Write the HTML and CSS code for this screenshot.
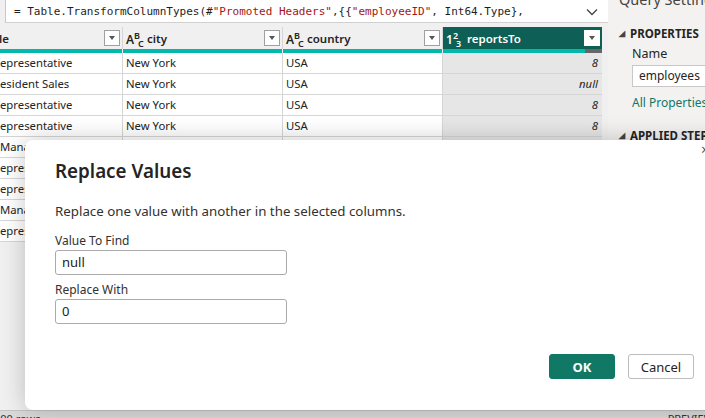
FILE: index.html
```html
<!DOCTYPE html>
<html>
<head>
<meta charset="utf-8">
<link rel="stylesheet" href="styles.css">
</head>
<body>
<div class="app">
  <div class="main">
    <div class="formula">
      <div class="code">= Table.TransformColumnTypes(#<span class="str">"Promoted Headers"</span>,{{<span class="str">"employeeID"</span>, Int64.Type},</div>
      <svg class="chev" width="12" height="8" viewBox="0 0 12 8"><path d="M1 1.5 L6 6.5 L11 1.5" fill="none" stroke="#444" stroke-width="1.3"/></svg>
    </div>
    <div class="grid">
      <div class="hcell c1"><span class="hname clip">le</span><span class="dd"><i></i></span></div>
      <div class="hcell"><span class="abc">A<sup>B</sup><sub>C</sub></span><span class="hname">city</span><span class="dd"><i></i></span></div>
      <div class="hcell"><span class="abc">A<sup>B</sup><sub>C</sub></span><span class="hname">country</span><span class="dd"><i></i></span></div>
      <div class="hcell sel"><span class="abc">1<sup>2</sup><sub>3</sub></span><span class="hname">reportsTo</span><span class="dd"><i></i></span></div>

      <div class="qbar"></div><div class="qbar"></div><div class="qbar"></div><div class="qbar qsel"></div>

      <div class="cell c1">epresentative</div><div class="cell">New York</div><div class="cell">USA</div><div class="cell num">8</div>
      <div class="cell c1">esident Sales</div><div class="cell">New York</div><div class="cell">USA</div><div class="cell num">null</div>
      <div class="cell c1">epresentative</div><div class="cell">New York</div><div class="cell">USA</div><div class="cell num">8</div>
      <div class="cell c1">epresentative</div><div class="cell">New York</div><div class="cell">USA</div><div class="cell num">8</div>
      <div class="cell c1">Manager</div><div class="cell">New York</div><div class="cell">USA</div><div class="cell num">2</div>
      <div class="cell c1">epresentative</div><div class="cell">New York</div><div class="cell">USA</div><div class="cell num">6</div>
      <div class="cell c1">epresentative</div><div class="cell">New York</div><div class="cell">USA</div><div class="cell num">6</div>
      <div class="cell c1">Manager</div><div class="cell">New York</div><div class="cell">USA</div><div class="cell num">2</div>
      <div class="cell c1">epresentative</div><div class="cell">New York</div><div class="cell">USA</div><div class="cell num">5</div>
    </div>
  </div>
  <div class="panel">
    <div class="ptitle">Query Settings</div>
    <div class="sect"><span class="tri">◢</span>PROPERTIES</div>
    <div class="plabel">Name</div>
    <div class="pinput">employees</div>
    <div class="plink">All Properties</div>
    <div class="sect sect2"><span class="tri">◢</span>APPLIED STEPS</div>
  </div>
</div>
<div class="status"><span class="rows">100 rows</span><span class="prev">PREVIEW DOWNLOADED</span></div>

<div class="dialog">
  <span class="close">×</span>
  <h1 class="dtitle">Replace Values</h1>
  <p class="ddesc">Replace one value with another in the selected columns.</p>
  <label class="flabel">Value To Find</label>
  <div class="finput">null</div>
  <label class="flabel flabel2">Replace With</label>
  <div class="finput">0</div>
  <div class="buttons">
    <button class="btn ok">OK</button>
    <button class="btn cancel">Cancel</button>
  </div>
</div>
</body>
</html>
```

FILE: styles.css
```css
* { box-sizing: border-box; }
html, body { margin: 0; padding: 0; }
body {
  width: 705px;
  height: 418px;
  overflow: hidden;
  position: relative;
  font-family: "Segoe UI", "Noto Sans", sans-serif;
  color: #252423;
  background: #f0f0f0;
}
.app { display: flex; height: 410px; }
.main { width: 608px; display: flex; flex-direction: column; background: #f0f0f0; }
.formula {
  height: 23px;
  margin-left: 5px;
  background: #fff;
  border-left: 1px solid #c8c8c8;
  border-bottom: 1px solid #d0d0d0;
  display: flex;
  align-items: center;
  padding-left: 8px;
  padding-right: 10px;
}
.code {
  flex: 1;
  font-family: "DejaVu Sans Mono", "Liberation Mono", monospace;
  font-size: 11px;
  color: #1e1e1e;
  white-space: nowrap;
  overflow: hidden;
  padding-top: 1px;
}
.str { color: #a31515; }
.chev { margin-top: 1px; }
.grid {
  margin-top: 4px;
  width: 602px;
  display: grid;
  grid-template-columns: 123px 160px 160px 159px;
  background: #f0f0f0;
}
.hcell {
  height: 22px;
  background: #f0f0f0;
  border-right: 1px solid #d6d6d6;
  display: flex;
  align-items: center;
  padding-left: 3px;
  font-size: 11.5px;
  font-weight: 600;
  overflow: hidden;
  white-space: nowrap;
}
.hcell.c1 { padding-left: 0; }
.hcell.sel { background: #0e5f55; color: #fff; border-right: none; }
.hname { flex: 1; }
.clip { margin-left: -1px; }
.abc {
  font-size: 12px;
  font-weight: 600;
  width: 21px;
  line-height: 1;
  position: relative;
  top: 1px;
  white-space: nowrap;
}
.abc sup { font-size: 9px; vertical-align: 5px; margin-left: 0; }
.abc sub { font-size: 9px; vertical-align: -3px; margin-left: -2px; }
.dd {
  width: 16px;
  height: 16px;
  background: #fff;
  border: 1px solid #a0a0a0;
  margin-right: 2px;
  display: flex;
  align-items: center;
  justify-content: center;
}
.sel .dd { border-color: #fff; }
.dd i {
  width: 0; height: 0;
  border-left: 3.5px solid transparent;
  border-right: 3.5px solid transparent;
  border-top: 4px solid #555;
}
.qbar { height: 4px; background: #01b8aa; border-right: 1px solid #f0f0f0; }
.qbar.qsel { background: linear-gradient(to right, #01b8aa 142px, #666 142px); border-right: none; }
.cell {
  height: 21px;
  background: #fff;
  border-right: 1px solid #d6d6d6;
  border-bottom: 1px solid #d6d6d6;
  font-size: 11.3px;
  line-height: 20px;
  padding-left: 3px;
  white-space: nowrap;
  overflow: hidden;
}
.cell.c1 { padding-left: 0; }
.cell.num {
  background: #e6e6e6;
  font-style: italic;
  text-align: right;
  padding-right: 4px;
  border-right: none;
}
.panel {
  flex: 1;
  background: #f3f2f1;
  padding-left: 11px;
  white-space: nowrap;
  overflow: hidden;
}
.ptitle { font-size: 14.5px; line-height: 20px; margin-top: -11px; color: #444; }
.sect {
  font-size: 11.5px;
  font-weight: 700;
  margin-top: 16px;
  line-height: 16px;
  color: #252423;
}
.sect2 { margin-top: 15px; }
.tri { font-size: 8px; margin-right: 5px; vertical-align: 2px; color: #444; }
.plabel { font-size: 12.5px; margin-left: 13px; margin-top: 3px; line-height: 18px; }
.pinput {
  margin-left: 13px;
  margin-top: 2px;
  height: 22px;
  background: #fff;
  border: 1px solid #c8c8c8;
  border-right: none;
  font-size: 12px;
  line-height: 20px;
  padding-left: 6px;
}
.plink { font-size: 12px; margin-left: 13px; margin-top: 7px; color: #117865; line-height: 18px; }
.status {
  height: 8px;
  background: #dadada;
  border-top: 1px solid #c4c4c4;
  display: flex;
  justify-content: space-between;
  font-size: 11px;
  line-height: 14px;
  overflow: hidden;
  white-space: nowrap;
  color: #333;
}
.rows { margin-left: -6px; margin-top: 1px; }
.prev { margin-right: -90px; margin-top: 1px; }
.dialog {
  position: absolute;
  left: 25px;
  top: 140px;
  width: 700px;
  height: 270px;
  background: #fff;
  border-radius: 8px;
  box-shadow: 0 0 24px rgba(0,0,0,0.22);
  padding: 17px 31px 0 30px;
  display: flex;
  flex-direction: column;
  align-items: flex-start;
}
.close { position: absolute; left: 676px; top: 0; font-size: 14px; color: #555; }
.dtitle { margin: 0; font-size: 18.8px; font-weight: 600; line-height: 28px; color: #252423; }
.ddesc { margin: 16px 0 0; font-size: 13.3px; line-height: 20px; color: #323130; }
.flabel { margin-top: 11px; font-size: 12px; line-height: 18px; color: #323130; }
.flabel2 { margin-top: 6px; }
.finput {
  width: 232px;
  height: 25px;
  border: 1px solid #ababab;
  border-radius: 3px;
  font-size: 13px;
  line-height: 23px;
  padding-left: 6px;
  color: #222;
}
.buttons { align-self: flex-end; display: flex; gap: 13px; margin-top: 30px; }
.btn {
  width: 66px;
  height: 25px;
  border-radius: 3px;
  font-family: inherit;
  font-size: 13px;
  padding: 0;
}
.ok { background: #117865; border: 1px solid #117865; color: #fff; font-weight: 700; }
.cancel { background: #fff; border: 1px solid #bcbcbc; color: #252423; }
```
